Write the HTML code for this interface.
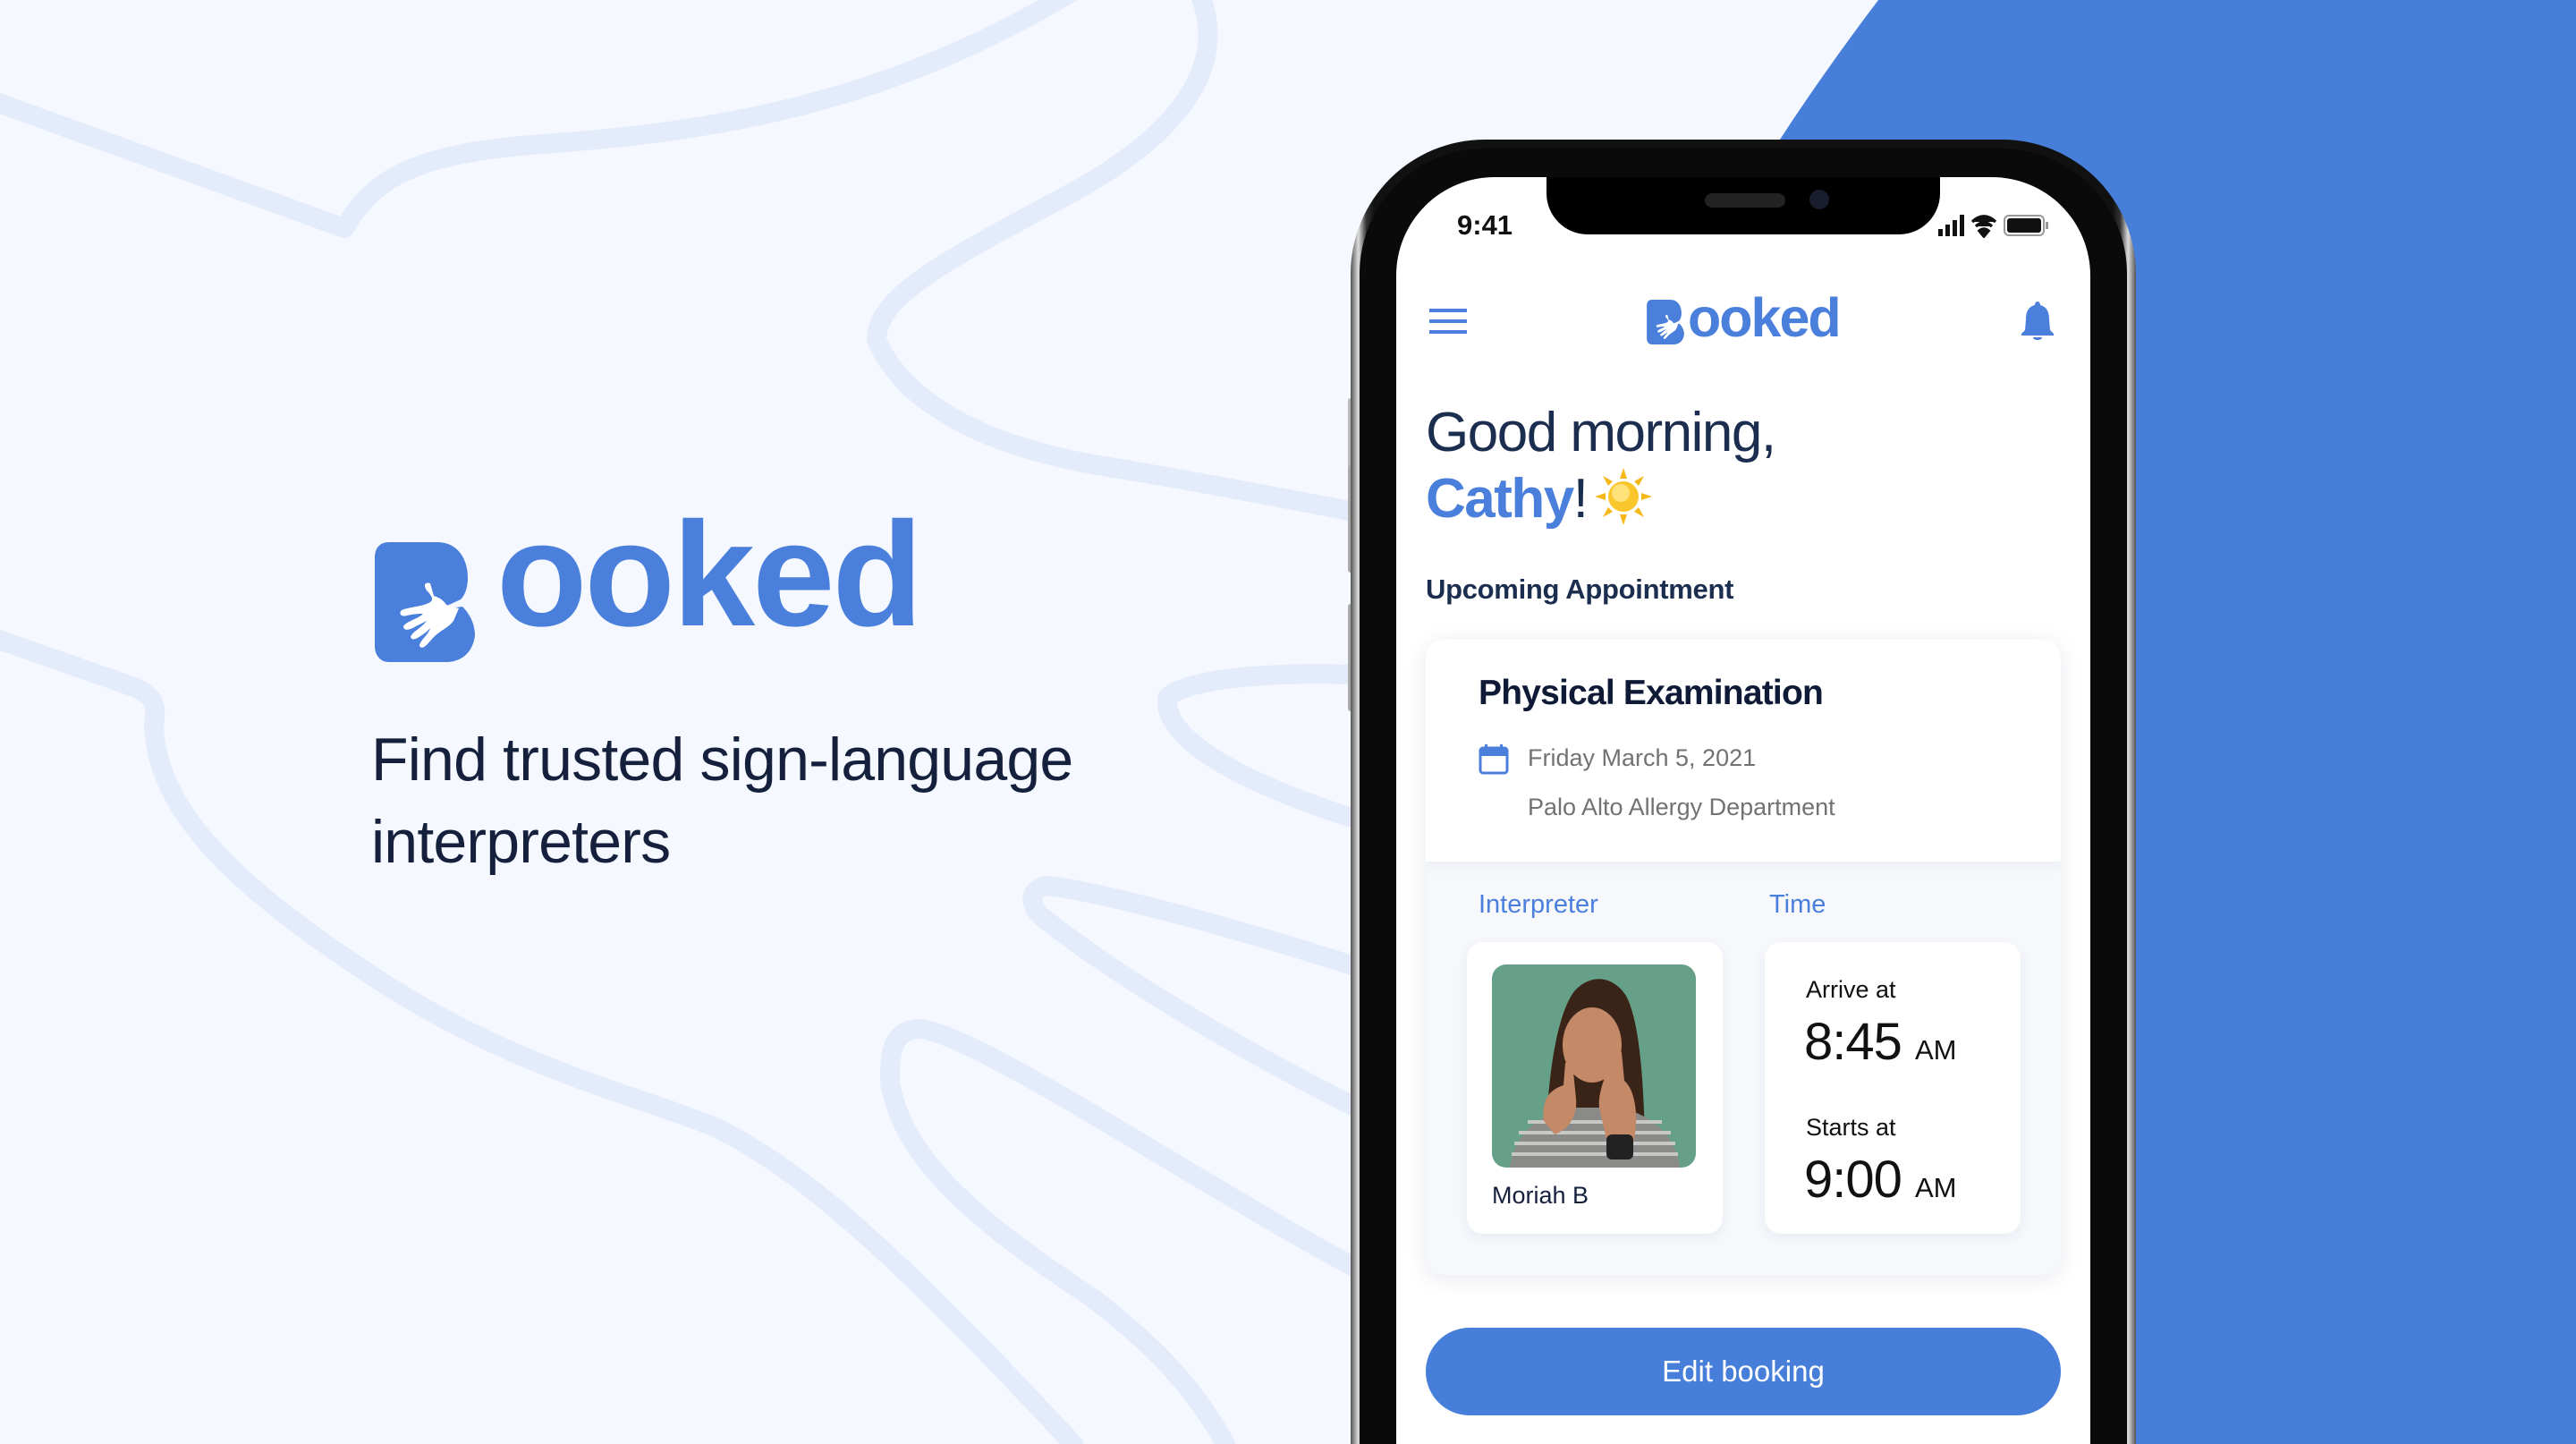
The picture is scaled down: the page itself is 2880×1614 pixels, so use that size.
<!DOCTYPE html>
<html style="width:2880px;height:1614px;overflow:hidden"><head><meta charset="utf-8"><style>
*{margin:0;padding:0;box-sizing:border-box}
html,body{width:2880px;height:1614px;overflow:hidden}
body{background:#f5f8fe;font-family:"Liberation Sans",sans-serif;position:relative}
#wrap{position:absolute;left:0;top:0;width:2880px;height:1614px;overflow:hidden}
.abs{position:absolute}
.t{position:absolute;white-space:nowrap}
</style></head><body><div id="wrap">
<svg class="abs" style="left:0;top:0" width="2880" height="1614">
<g fill="none" stroke="#e4ecfb" stroke-width="22" stroke-linecap="round" stroke-linejoin="round">
<path d="M-10 112 L385 255 C420 195 470 170 620 160 C820 145 1000 110 1200 -10"/>
<path d="M1340 -10 C1370 60 1340 140 1190 220 C1060 290 980 330 980 380 C1010 450 1100 500 1240 522 C1350 540 1450 560 1530 575"/>
<path d="M-10 712 L150 768 C175 780 175 790 172 810 C175 900 250 980 400 1080 C560 1190 700 1220 800 1260 C900 1310 1000 1400 1200 1614"/>
<path d="M1530 755 C1450 750 1330 755 1305 780 C1300 830 1400 880 1530 920"/>
<path d="M1530 1085 C1360 1030 1220 995 1170 990 C1150 995 1150 1010 1165 1025 C1260 1100 1400 1180 1530 1245"/>
<path d="M1530 1425 C1350 1330 1100 1160 1030 1150 C995 1150 995 1180 995 1210 C1010 1300 1100 1370 1220 1450 C1300 1510 1340 1560 1370 1614"/>
</g>
<circle cx="4200" cy="1600" r="2640" fill="#467ed9"/>
</svg>

<!-- Left logo -->
<svg class="abs" style="left:419px;top:606px" width="128" height="134" viewBox="0 0 128 134">
<path d="M16 0 H70 C92 0 104 18 104 40 C104 52 100 60 96 64 L70 76 L98 72 C108 82 112 94 112 104 C110 122 98 134 80 134 H16 C6 134 0 126 0 116 V18 C0 6 6 0 16 0 Z" fill="#4a7fdc"/>
<path d="M62 46 C56 44 54 48 58 54 C64 60 66 64 62 67 C54 72 40 72 30 76 C26 80 30 84 36 82 C44 80 50 80 54 80 C48 86 36 88 32 94 C32 100 40 98 46 94 L58 88 C52 96 42 100 40 106 C42 112 50 106 58 100 L62 96 C60 104 50 110 50 116 C54 122 60 112 66 106 C74 98 82 96 88 88 L94 74 L80 70 C76 64 72 62 66 60 Z" fill="#fff"/>
</svg>
<div class="t" style="left:555px;top:560px;font-size:166px;font-weight:bold;color:#4a7fdc;letter-spacing:-3px;line-height:1">ooked</div>
<div class="t" style="left:415px;top:803px;font-size:68px;color:#15203d;line-height:92px;letter-spacing:-0.8px">Find trusted sign-language<br>interpreters</div>

<!-- Phone -->
<div class="abs" style="left:1507px;top:445px;width:7px;height:80px;background:#bbb;border-radius:3px"></div>
<div class="abs" style="left:1507px;top:520px;width:7px;height:120px;background:#aaa;border-radius:3px"></div>
<div class="abs" style="left:1507px;top:675px;width:7px;height:120px;background:#aaa;border-radius:3px"></div>
<div class="abs" style="left:1510px;top:156px;width:878px;height:1458px;border-radius:150px 150px 0 0;background:linear-gradient(90deg,#555,#ddd 1%,#333 2%,#111 3%,#111 97%,#333 98%,#ddd 99%,#555)"></div>
<div class="abs" style="left:1520px;top:166px;width:858px;height:1448px;border-radius:140px 140px 0 0;background:#0a0a0a"></div>
<div class="abs" style="left:1561px;top:198px;width:776px;height:1416px;border-radius:110px 110px 0 0;background:#fff;overflow:hidden">
  <div class="abs" style="left:168px;top:-10px;width:440px;height:74px;background:#000;border-radius:0 0 46px 46px"></div>
  <div class="abs" style="left:345px;top:18px;width:90px;height:16px;background:#222;border-radius:8px"></div>
  <div class="abs" style="left:462px;top:14px;width:22px;height:22px;background:#1a1d2e;border-radius:50%"></div>
  <div class="t" style="left:68px;top:36px;font-size:31px;font-weight:bold;color:#111">9:41</div>
  <svg class="abs" style="left:606px;top:40px" width="130" height="28">
    <rect x="0" y="18" width="5" height="8" fill="#111"/><rect x="8" y="13" width="5" height="13" fill="#111"/><rect x="16" y="8" width="5" height="18" fill="#111"/><rect x="24" y="2" width="5" height="24" fill="#111"/>
    <path d="M38 10 Q51 -2 64 10 M42 15 Q51 7 60 15 M46 20 Q51 16 56 20 L51 26 Z" stroke="#111" stroke-width="3.5" fill="#111" fill-rule="evenodd"/>
    <rect x="74" y="3" width="44" height="22" rx="5" fill="none" stroke="#999" stroke-width="2"/><rect x="77" y="6" width="38" height="16" rx="3" fill="#111"/><rect x="120" y="10" width="3" height="8" fill="#999"/>
  </svg>
  <svg class="abs" style="left:37px;top:147px" width="42" height="28"><g fill="#4a7fdc"><rect y="0" width="42" height="4"/><rect y="12" width="42" height="4"/><rect y="24" width="42" height="4"/></g></svg>
  <svg class="abs" style="left:280px;top:137px" width="48" height="50" viewBox="0 0 128 134">
    <path d="M16 0 H70 C92 0 104 18 104 40 C104 52 100 60 96 64 L70 76 L98 72 C108 82 112 94 112 104 C110 122 98 134 80 134 H16 C6 134 0 126 0 116 V18 C0 6 6 0 16 0 Z" fill="#4a7fdc"/>
    <path d="M62 46 C56 44 54 48 58 54 C64 60 66 64 62 67 C54 72 40 72 30 76 C26 80 30 84 36 82 C44 80 50 80 54 80 C48 86 36 88 32 94 C32 100 40 98 46 94 L58 88 C52 96 42 100 40 106 C42 112 50 106 58 100 L62 96 C60 104 50 110 50 116 C54 122 60 112 66 106 C74 98 82 96 88 88 L94 74 L80 70 C76 64 72 62 66 60 Z" fill="#fff"/>
  </svg>
  <div class="t" style="left:326px;top:127px;font-size:61px;font-weight:bold;color:#4a7fdc;letter-spacing:-2px;line-height:1">ooked</div>
  <svg class="abs" style="left:697px;top:137px" width="40" height="46"><path d="M20 2 C22 2 23 4 23 6 C31 8 33 15 33 22 L34 34 L38 38 V40 H2 V38 L6 34 L7 22 C7 15 9 8 17 6 C17 4 18 2 20 2 Z M15 42 H25 C25 46 15 46 15 42 Z" fill="#4a7fdc"/></svg>
  <div class="t" style="left:33px;top:250px;font-size:62px;color:#1c2e4f;letter-spacing:-1.5px">Good morning,</div>
  <div class="t" style="left:33px;top:324px;font-size:62px;color:#4a7fdc;font-weight:bold;letter-spacing:-1.5px">Cathy<span style="color:#1c2e4f;font-weight:normal">!</span></div>
  <svg class="abs" style="left:222px;top:325px" width="64" height="64" viewBox="0 0 64 64">
    <g fill="#f6b818"><path d="M32 0 L36 12 H28Z"/><path d="M32 64 L36 52 H28Z"/><path d="M0 32 L12 28 V36Z"/><path d="M64 32 L52 28 V36Z"/><path d="M9 9 L20 15 L15 20Z"/><path d="M55 9 L44 15 L49 20Z"/><path d="M9 55 L20 49 L15 44Z"/><path d="M55 55 L44 49 L49 44Z"/></g>
    <circle cx="32" cy="32" r="17" fill="#f9c62c"/><circle cx="29" cy="28" r="10" fill="#fde27a"/>
  </svg>
  <div class="t" style="left:33px;top:443px;font-size:31px;font-weight:bold;color:#1c2e4f;letter-spacing:-0.3px">Upcoming Appointment</div>

  <div class="abs" style="left:33px;top:517px;width:710px;height:710px;border-radius:20px;background:#f6f8fc;box-shadow:0 4px 24px rgba(30,50,90,.10);overflow:hidden">
    <div class="abs" style="left:0;top:0;width:710px;height:248px;background:#fff;box-shadow:0 6px 14px rgba(30,50,90,.05)"></div>
    <div class="t" style="left:59px;top:38px;font-size:39px;font-weight:bold;color:#0f1a36;letter-spacing:-0.8px">Physical Examination</div>
    <svg class="abs" style="left:59px;top:117px" width="34" height="34"><rect x="2" y="4" width="30" height="28" rx="3" fill="none" stroke="#4a7fdc" stroke-width="3"/><rect x="2" y="4" width="30" height="9" fill="#4a7fdc"/><rect x="7" y="0" width="3" height="7" fill="#4a7fdc"/><rect x="24" y="0" width="3" height="7" fill="#4a7fdc"/></svg>
    <div class="t" style="left:114px;top:117px;font-size:27px;color:#727272">Friday March 5, 2021</div>
    <div class="t" style="left:114px;top:172px;font-size:27px;color:#727272">Palo Alto Allergy Department</div>
    <div class="t" style="left:59px;top:280px;font-size:29px;color:#4a7fdc">Interpreter</div>
    <div class="t" style="left:384px;top:280px;font-size:29px;color:#4a7fdc">Time</div>
    <div class="abs" style="left:46px;top:338px;width:286px;height:326px;background:#fff;border-radius:18px;box-shadow:0 4px 14px rgba(30,50,90,.07)">
      <svg class="abs" style="left:28px;top:25px;border-radius:16px" width="228" height="227" viewBox="0 0 228 227">
        <rect width="228" height="227" fill="#66a088"/>
        <path d="M60 227 C60 140 70 60 92 30 C110 10 135 12 150 35 C168 70 170 150 172 227Z" fill="#3a2418"/>
        <ellipse cx="112" cy="90" rx="33" ry="42" fill="#c48a68"/>
        <path d="M20 227 C25 190 50 170 85 160 L145 160 C180 170 205 190 210 227Z" fill="#8a8a88"/>
        <g stroke="#c8c8c6" stroke-width="4"><path d="M25 200 H205 M22 212 H208 M30 188 H200 M40 176 H190"/></g>
        <path d="M58 175 C55 150 65 140 80 135 L82 110 L90 110 L94 150 C96 170 85 185 70 190Z" fill="#c48a68"/>
        <path d="M120 160 C118 140 130 120 135 100 L145 98 L148 130 C160 140 165 170 158 200 L130 205Z" fill="#c48a68"/>
        <rect x="128" y="190" width="30" height="28" rx="6" fill="#222"/>
      </svg>
      <div class="t" style="left:28px;top:268px;font-size:27px;color:#15203d">Moriah B</div>
    </div>
    <div class="abs" style="left:379px;top:338px;width:286px;height:326px;background:#fff;border-radius:18px;box-shadow:0 4px 14px rgba(30,50,90,.07)">
      <div class="t" style="left:46px;top:38px;font-size:27px;color:#111">Arrive at</div>
      <div class="t" style="left:44px;top:78px;font-size:58px;color:#111;letter-spacing:-1px">8:45 <span style="font-size:31px;letter-spacing:0">AM</span></div>
      <div class="t" style="left:46px;top:192px;font-size:27px;color:#111">Starts at</div>
      <div class="t" style="left:44px;top:232px;font-size:58px;color:#111;letter-spacing:-1px">9:00 <span style="font-size:31px;letter-spacing:0">AM</span></div>
    </div>
  </div>

  <div class="abs" style="left:33px;top:1286px;width:710px;height:98px;border-radius:49px;background:#467ed9;color:#fff;font-size:33px;text-align:center;line-height:98px">Edit booking</div>
</div>
</div></body></html>
